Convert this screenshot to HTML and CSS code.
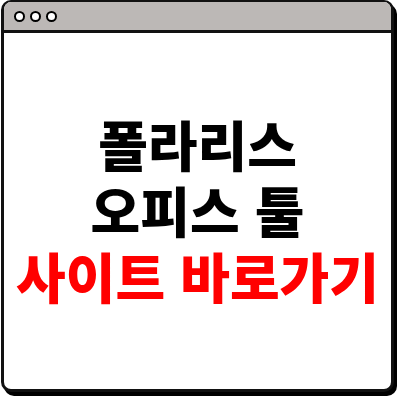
FILE: index.html
```html
<!DOCTYPE html>
<html lang="ko">
<head>
<meta charset="utf-8">
<link rel="stylesheet" href="styles.css">
</head>
<body>
<div class="window">
  <div class="titlebar">
    <span class="dot"></span><span class="dot"></span><span class="dot"></span>
  </div>
  <div class="content">
    <div class="line">폴라리스</div>
    <div class="line">오피스 툴</div>
    <div class="line red">사이트 바로가기</div>
  </div>
</div>
</body>
</html>
```
FILE: styles.css
```css
html, body {
  margin: 0;
  padding: 0;
  background: #ffffff;
}
body {
  width: 400px;
  height: 400px;
  padding: 0 0 0 1px;
  box-sizing: border-box;
}
.window {
  width: 393px;
  height: 392px;
  box-sizing: border-box;
  border: 3px solid #111111;
  border-top-width: 2px;
  border-radius: 10px;
  box-shadow: 3px 4px 0 #000000;
  overflow: hidden;
  display: flex;
  flex-direction: column;
  background: #ffffff;
}
.titlebar {
  height: 28px;
  flex: none;
  background: #bcb8b6;
  border-bottom: 3px solid #111111;
  display: flex;
  align-items: center;
  gap: 5px;
  padding-left: 10px;
}
.dot {
  width: 7px;
  height: 7px;
  border: 2.5px solid #000000;
  border-radius: 50%;
  background: #ffffff;
}
.content {
  flex: 1;
  display: flex;
  flex-direction: column;
  align-items: center;
  justify-content: center;
  padding-bottom: 2px;
  font-family: "Noto Sans CJK KR", "Noto Sans", sans-serif;
  font-weight: 900;
  font-size: 54px;
  line-height: 66px;
  color: #000000;
}
.line {
  white-space: nowrap;
}
.red {
  color: #ff0000;
}
```
